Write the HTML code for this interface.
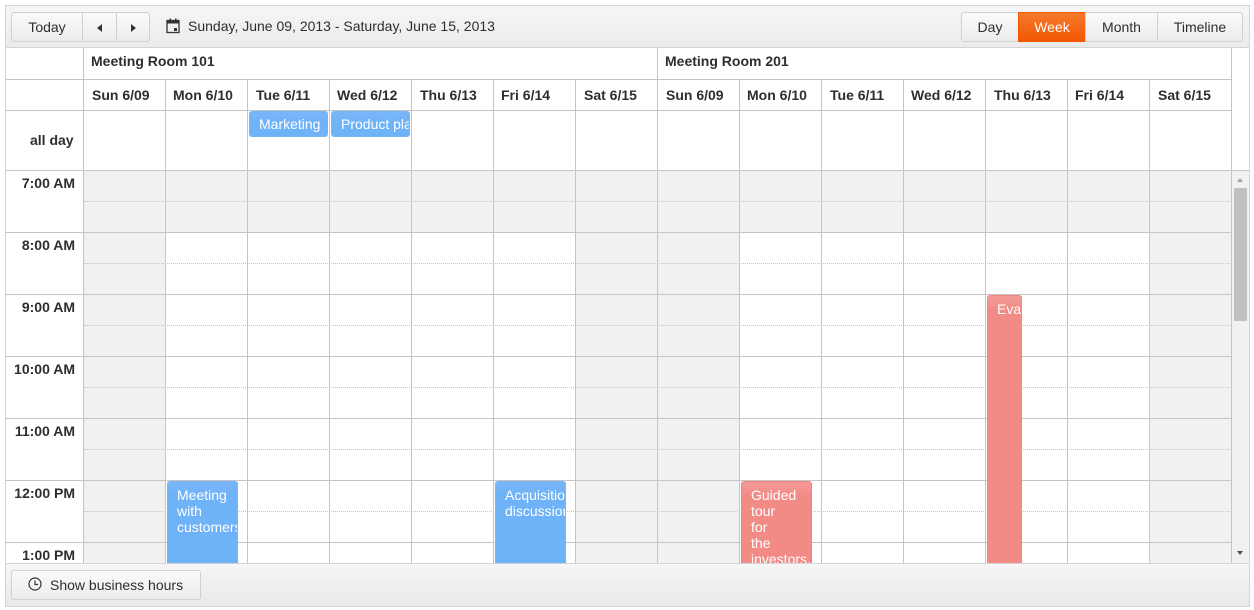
<!DOCTYPE html>
<html><head><style>
*{box-sizing:border-box;margin:0;padding:0}
body{width:1254px;height:610px;background:#fff;font-family:"Liberation Sans",Arial,sans-serif;font-size:14px;color:#2e2e2e;position:relative;overflow:hidden}
.a{position:absolute}
.frame{left:5px;top:5px;width:1245px;height:602px;border:1px solid #d5d5d5}
.tb{left:6px;top:6px;width:1243px;height:42px;background:linear-gradient(#f6f6f6,#ebebeb);border-bottom:1px solid #d5d5d5}
.btn{position:absolute;top:12px;height:30px;border:1px solid #d0d0d0;background:linear-gradient(#fafafa,#ececec);line-height:28px;text-align:center;color:#2e2e2e;font-size:14px}
.hl{background:#c5c5c5}
.b{font-weight:bold;font-size:14px;color:#2e2e2e}
.ev{position:absolute;color:#fff;font-size:14px;line-height:16px;border-radius:3px;overflow:hidden;padding:5px 0 0 9px;white-space:nowrap}
.blue{background:linear-gradient(#79b6f9,#6eb2f8 14px,#6eb2f8);border:1px solid #78b5f5}
.red{background:linear-gradient(#f49a98,#f28b86 14px,#f28b86);border:1px solid #f08680}
.dot{position:absolute;left:84px;width:1148px;height:0;border-top:1px dotted #c5c5c5}
.tl{position:absolute;width:70px;text-align:right;left:5px;font-weight:bold;font-size:14px}
.gray{position:absolute;background:#f1f1f1}
</style></head><body>
<div class="a frame"></div>
<div class="a tb"></div>
<div class="btn" style="left:11px;width:72px;border-radius:3px 0 0 3px">Today</div>
<div class="btn" style="left:82px;width:35px;border-left:1px solid #d0d0d0"><span style="display:inline-block;width:0;height:0;border-top:4px solid transparent;border-bottom:4px solid transparent;border-right:5px solid #333;vertical-align:middle"></span></div>
<div class="btn" style="left:116px;width:34px;border-radius:0 3px 3px 0"><span style="display:inline-block;width:0;height:0;border-top:4px solid transparent;border-bottom:4px solid transparent;border-left:5px solid #333;vertical-align:middle"></span></div>
<svg class="a" style="left:166px;top:18px" width="14" height="16" viewBox="0 0 14 16"><rect x="1" y="2.5" width="12" height="12" fill="none" stroke="#333" stroke-width="1.3"/><rect x="1" y="2.5" width="12" height="3" fill="#333"/><rect x="3.5" y="0.5" width="1.5" height="3" fill="#333"/><rect x="9" y="0.5" width="1.5" height="3" fill="#333"/><rect x="8" y="10" width="3" height="3" fill="#333"/></svg>
<div class="a" style="left:188px;top:18px;font-size:14px;color:#2e2e2e">Sunday, June 09, 2013 - Saturday, June 15, 2013</div>
<div class="btn" style="left:961px;width:58px;border-radius:3px 0 0 3px">Day</div>
<div class="btn" style="left:1018px;width:68px;background:linear-gradient(#f5792c,#f35800);border-color:#f35800;color:#fff">Week</div>
<div class="btn" style="left:1085px;width:73px">Month</div>
<div class="btn" style="left:1157px;width:86px;border-radius:0 3px 3px 0">Timeline</div>

<div class="a hl" style="left:83px;top:48px;width:1px;height:515px"></div>
<div class="a hl" style="left:1231px;top:48px;width:1px;height:123px"></div>
<div class="a hl" style="left:657px;top:48px;width:1px;height:31px"></div>
<div class="a hl" style="left:6px;top:79px;width:1226px;height:1px"></div>
<div class="a hl" style="left:6px;top:110px;width:1226px;height:1px"></div>
<div class="a hl" style="left:6px;top:170px;width:1243px;height:1px"></div>
<div class="a" style="left:84px;top:79px;width:1148px;height:91px;background:repeating-linear-gradient(to right,transparent 0 81px,#c5c5c5 81px 82px)"></div>
<div class="a b" style="left:91px;top:53px">Meeting Room 101</div>
<div class="a b" style="left:665px;top:53px">Meeting Room 201</div>
<div class="a b" style="left:92px;top:87px">Sun 6/09</div><div class="a b" style="left:173px;top:87px">Mon 6/10</div><div class="a b" style="left:256px;top:87px">Tue 6/11</div><div class="a b" style="left:337px;top:87px">Wed 6/12</div><div class="a b" style="left:420px;top:87px">Thu 6/13</div><div class="a b" style="left:501px;top:87px">Fri 6/14</div><div class="a b" style="left:584px;top:87px">Sat 6/15</div>
<div class="a b" style="left:666px;top:87px">Sun 6/09</div><div class="a b" style="left:747px;top:87px">Mon 6/10</div><div class="a b" style="left:830px;top:87px">Tue 6/11</div><div class="a b" style="left:911px;top:87px">Wed 6/12</div><div class="a b" style="left:994px;top:87px">Thu 6/13</div><div class="a b" style="left:1075px;top:87px">Fri 6/14</div><div class="a b" style="left:1158px;top:87px">Sat 6/15</div>
<div class="a b" style="left:30px;top:132px">all day</div>
<div class="ev blue" style="left:249px;top:111px;width:79px;height:26px;padding-top:4px">Marketing</div>
<div class="ev blue" style="left:331px;top:111px;width:79px;height:26px;padding-top:4px">Product pla</div>

<div class="gray" style="left:84px;top:171px;width:1148px;height:61px"></div>
<div class="gray" style="left:84px;top:171px;width:81px;height:392px"></div>
<div class="gray" style="left:576px;top:171px;width:163px;height:392px"></div>
<div class="gray" style="left:1150px;top:171px;width:81px;height:392px"></div>
<div class="a" style="left:5px;top:171px;width:1227px;height:392px;background:repeating-linear-gradient(to bottom,transparent 0 61px,#c5c5c5 61px 62px)"></div>
<div class="a" style="left:84px;top:171px;width:1148px;height:392px;background:repeating-linear-gradient(to right,transparent 0 81px,#c5c5c5 81px 82px)"></div>
<div class="dot" style="top:201px"></div><div class="dot" style="top:263px"></div><div class="dot" style="top:325px"></div><div class="dot" style="top:387px"></div><div class="dot" style="top:449px"></div><div class="dot" style="top:511px"></div>
<div class="tl" style="top:175px">7:00 AM</div><div class="tl" style="top:237px">8:00 AM</div><div class="tl" style="top:299px">9:00 AM</div><div class="tl" style="top:361px">10:00 AM</div><div class="tl" style="top:423px">11:00 AM</div><div class="tl" style="top:485px">12:00 PM</div><div class="tl" style="top:547px">1:00 PM</div>
<div class="ev blue" style="left:167px;top:481px;width:71px;height:90px;white-space:normal;padding-right:0">Meeting with customers</div>
<div class="ev blue" style="left:495px;top:481px;width:71px;height:90px">Acquisition<br>discussion</div>
<div class="ev red" style="left:741px;top:481px;width:71px;height:90px">Guided<br>tour<br>for<br>the<br>investors.</div>
<div class="ev red" style="left:987px;top:295px;width:35px;height:280px">Eva</div>
<div class="a" style="left:1232px;top:171px;width:17px;height:392px;background:#f1f1f1"></div>
<div class="a" style="left:1234px;top:188px;width:13px;height:133px;background:#c1c1c1"></div>
<div class="a" style="left:1237px;top:178px;width:0;height:0;border-left:3px solid transparent;border-right:3px solid transparent;border-bottom:4px solid #a3a3a3"></div>
<div class="a" style="left:1237px;top:551px;width:0;height:0;border-left:3px solid transparent;border-right:3px solid transparent;border-top:4px solid #505050"></div>
<div class="a" style="left:6px;top:563px;width:1243px;height:43px;background:linear-gradient(#f6f6f6,#e9e9e9);border-top:1px solid #d5d5d5"></div>
<div class="btn" style="left:11px;top:570px;width:190px;border-radius:3px;text-align:left;padding-left:38px">Show business hours</div>
<svg class="a" style="left:28px;top:577px" width="14" height="14" viewBox="0 0 14 14"><circle cx="7" cy="7" r="6" fill="none" stroke="#333" stroke-width="1.2"/><path d="M7 3.5V7.5H10" fill="none" stroke="#333" stroke-width="1.2"/></svg>
</body></html>
